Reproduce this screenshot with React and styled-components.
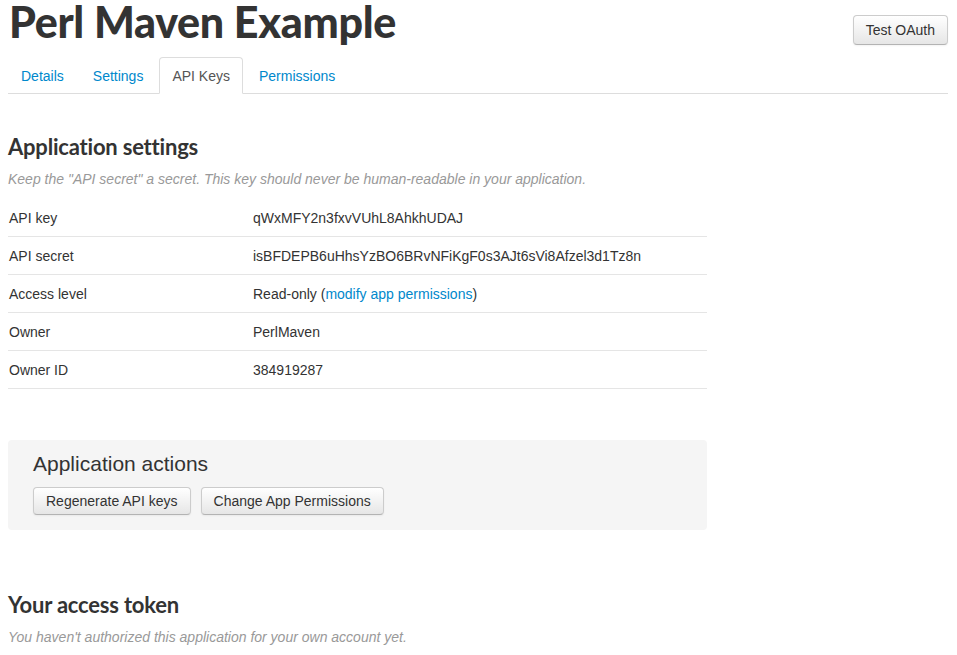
import React from "react";
import styled, { createGlobalStyle } from "styled-components";

const GlobalStyle = createGlobalStyle`
  body {
    margin: 0;
    background: #fff;
    font-family: "Liberation Sans", Arial, sans-serif;
    font-size: 14px;
    color: #333;
  }
`;

const Page = styled.div`
  padding: 0 9px 0 8px;
  width: 940px;
`;

const Header = styled.div`
  display: flex;
  justify-content: space-between;
  align-items: flex-start;
  height: 57px;
`;

const Title = styled.h1`
  margin: -4px 0 0 0;
  padding-left: 1px;
  font-family: Lato, "Open Sans", sans-serif;
  font-weight: 900;
  font-size: 43px;
  line-height: 52px;
  color: #333;
  letter-spacing: -0.3px;
`;

const Button = styled.button`
  font-family: "Liberation Sans", Arial, sans-serif;
  font-size: 14px;
  color: #333;
  height: 28px;
  padding: 0 12px;
  white-space: nowrap;
  border: 1px solid #ccc;
  border-bottom-color: #b3b3b3;
  border-radius: 4px;
  background: linear-gradient(#ffffff, #e6e6e6);
  box-shadow: inset 0 1px 0 rgba(255, 255, 255, 0.2), 0 1px 2px rgba(0, 0, 0, 0.05);
  cursor: pointer;
`;

const TopButton = styled(Button)`
  margin-top: 15px;
  height: 30px;
`;

const Tabs = styled.ul`
  display: flex;
  list-style: none;
  margin: 0;
  padding: 0;
  border-bottom: 1px solid #ddd;
  height: 36px;
`;

const Tab = styled.li`
  margin-bottom: -1px;
  margin-right: 3px;
  padding: 0 12px;
  line-height: 36px;
  font-size: 14px;
  color: ${(p) => (p.active ? "#555" : "#0088cc")};
  background: ${(p) => (p.active ? "#fff" : "transparent")};
  border: 1px solid ${(p) => (p.active ? "#ddd" : "transparent")};
  border-bottom-color: ${(p) => (p.active ? "#fff" : "transparent")};
  border-radius: 4px 4px 0 0;
`;

const SectionTitle = styled.h2`
  margin: ${(p) => p.top}px 0 0 0;
  font-family: Lato, "Open Sans", sans-serif;
  font-weight: 700;
  font-size: 22px;
  line-height: 28px;
  letter-spacing: -0.2px;
  color: #333;
`;

const Hint = styled.p`
  margin: 9px 0 0 0;
  font-size: 14px;
  font-style: italic;
  color: #999;
  line-height: 18px;
`;

const Table = styled.div`
  width: 699px;
  margin-top: 11px;
`;

const Row = styled.div`
  display: grid;
  grid-template-columns: 244px 1fr;
  height: 37px;
  align-items: center;
  border-bottom: 1px solid #e5e5e5;
  padding-left: 1px;
  font-size: 14px;
  color: #333;
`;

const Link = styled.a`
  color: #0088cc;
  text-decoration: none;
`;

const Well = styled.div`
  width: 699px;
  margin-top: 51px;
  background: #f5f5f5;
  border-radius: 4px;
  padding: 11px 25px 15px;
  box-sizing: border-box;
`;

const WellTitle = styled.h3`
  margin: 0;
  font-family: "Liberation Sans", Arial, sans-serif;
  font-weight: normal;
  font-size: 21px;
  line-height: 26px;
  color: #333;
`;

const ButtonRow = styled.div`
  display: flex;
  gap: 10px;
  margin-top: 10px;
`;

const rows = [
  ["API key", "qWxMFY2n3fxvVUhL8AhkhUDAJ"],
  ["API secret", "isBFDEPB6uHhsYzBO6BRvNFiKgF0s3AJt6sVi8Afzel3d1Tz8n"],
  [
    "Access level",
    <>
      Read-only (<Link href="#">modify app permissions</Link>)
    </>,
  ],
  ["Owner", "PerlMaven"],
  ["Owner ID", "384919287"],
];

const App = () => {
  return (
    <Page>
      <GlobalStyle />
      <Header>
        <Title>Perl Maven Example</Title>
        <TopButton>Test OAuth</TopButton>
      </Header>
      <Tabs>
        <Tab>Details</Tab>
        <Tab>Settings</Tab>
        <Tab active>API Keys</Tab>
        <Tab>Permissions</Tab>
      </Tabs>

      <SectionTitle top={39}>Application settings</SectionTitle>
      <Hint>Keep the "API secret" a secret. This key should never be human-readable in your application.</Hint>
      <Table>
        {rows.map(([label, value]) => (
          <Row key={label}>
            <span>{label}</span>
            <span>{value}</span>
          </Row>
        ))}
      </Table>

      <Well>
        <WellTitle>Application actions</WellTitle>
        <ButtonRow>
          <Button>Regenerate API keys</Button>
          <Button>Change App Permissions</Button>
        </ButtonRow>
      </Well>

      <SectionTitle top={61}>Your access token</SectionTitle>
      <Hint>You haven't authorized this application for your own account yet.</Hint>
    </Page>
  );
};

export default App;
